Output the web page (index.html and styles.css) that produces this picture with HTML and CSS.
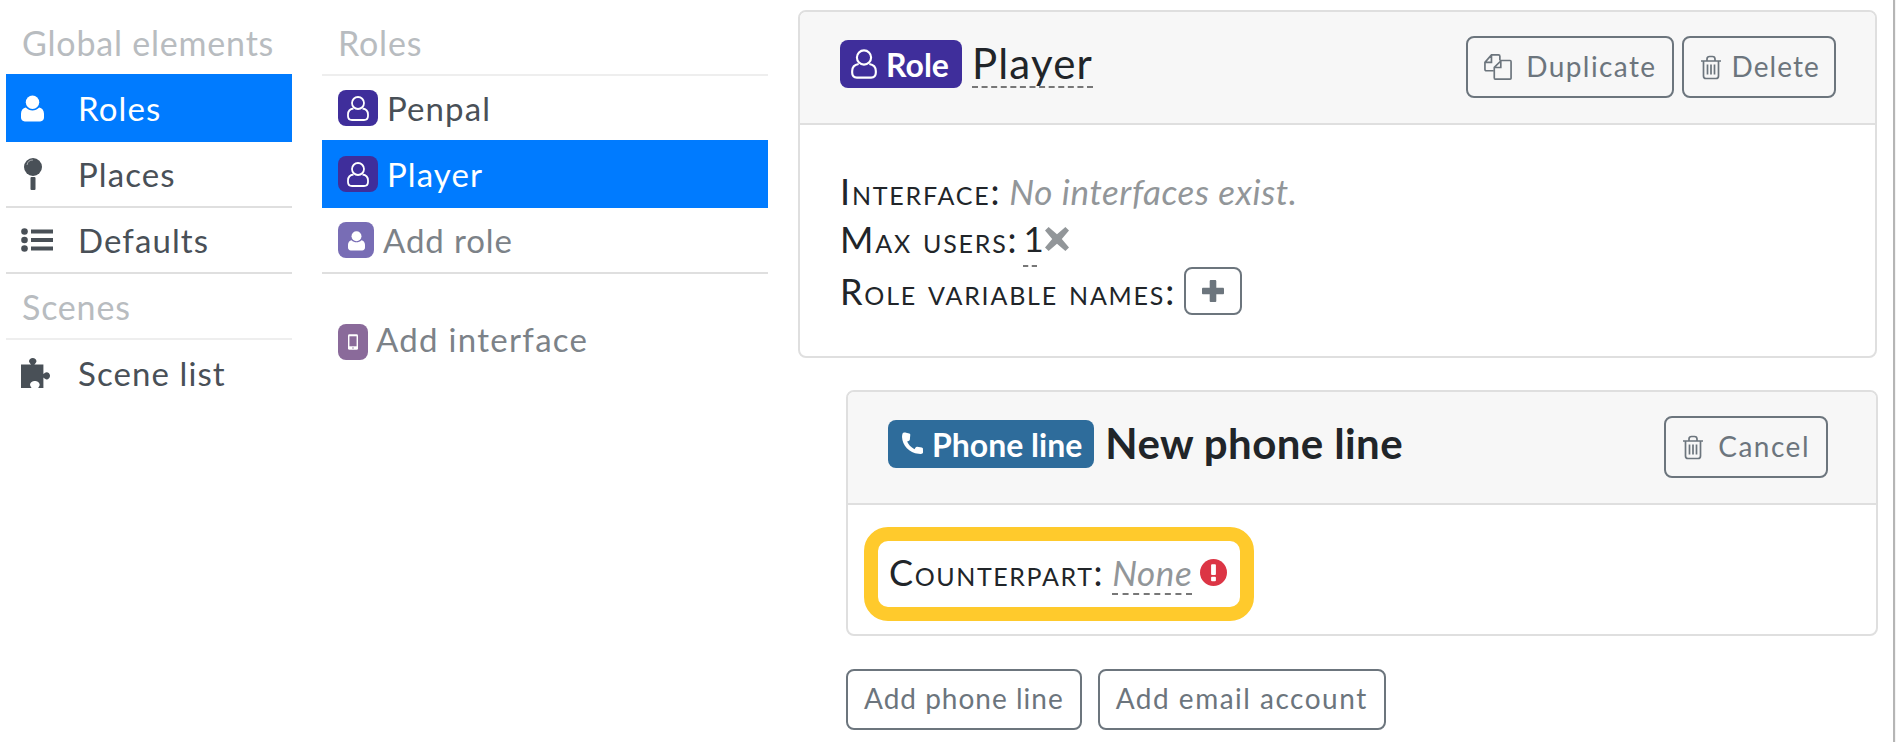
FILE: index.html
```html
<!DOCTYPE html>
<html lang="en">

<head>
    <meta charset="UTF-8">
    <meta name="viewport" content="width=device-width, initial-scale=1.0">
    <title>Role editor</title>
    <link rel="stylesheet" href="styles.css">
</head>

<body>
    <svg class="defs" width="0" height="0">
        <symbol id="user-o" viewBox="1 1 22 25">
            <circle cx="12" cy="8" r="6" fill="none" stroke="currentColor" stroke-width="1.8"/>
            <path d="M7.5 13.5C4 14 2 16.500 2 19.500V21c0 2.500 1.500 4 4 4h12c2.500 0 4-1.500 4-4v-1.500c0-3-2-5.500-5.500-6" fill="none" stroke="currentColor" stroke-width="1.800"/>
        </symbol>
        <symbol id="user" viewBox="0 0 24 28">
            <circle cx="12" cy="8" r="7"/>
            <path d="M5 13.500c2 2 4.500 3 7 3s5-1 7-3c3 .5 5 3 5 6.500v4c0 2.500-1.500 4-4 4H4c-2.500 0-4-1.500-4-4v-4c0-3.500 2-6 5-6.500z"/>
        </symbol>
        <symbol id="trash" viewBox="0 0 22 24">
            <path d="M1 5.500h20M7 5.500V3.500C7 2 8 1 9.500 1h3C14 1 15 2 15 3.500v2M3.500 5.500V20.500C3.500 22 4.500 23 6 23h10c1.500 0 2.500-1 2.500-2.500V5.500M7.500 9v10M11 9v10M14.500 9v10" fill="none" stroke="currentColor" stroke-width="1.700"/>
        </symbol>
    </svg>

    <div class="page">
        <nav class="col col-nav">
            <div class="col-head">Global elements</div>
            <a class="item active">
                <svg class="nav-icon person"><use href="#user"/></svg>
                <span>Roles</span>
            </a>
            <a class="item line">
                <svg class="nav-icon" viewBox="0 0 28 32"><circle cx="10" cy="9" r="9" fill="currentColor"/><path d="M4 7a6 6 0 0 1 6-5" stroke="#fff" stroke-width="1" fill="none" opacity=".5"/><rect x="7.500" y="19" width="5" height="13" rx="1" fill="currentColor"/></svg>
                <span>Places</span>
            </a>
            <a class="item line">
                <svg class="nav-icon" viewBox="0 0 32 24"><circle cx="3.500" cy="3.500" r="3.300" fill="currentColor"/><circle cx="3.500" cy="12" r="3.300" fill="currentColor"/><circle cx="3.500" cy="20.500" r="3.300" fill="currentColor"/><path d="M10 1.500h22v4H10zM10 10h22v4H10zM10 18.500h22v4H10z" fill="currentColor"/></svg>
                <span>Defaults</span>
            </a>
            <div class="col-head head-scenes">Scenes</div>
            <a class="item">
                <svg class="nav-icon" viewBox="0 0 30 28"><path fill="currentColor" d="M0 6h9.500C8.500 5 7.500 4 7.500 3c0-1.800 1.600-3 3.500-3s3.500 1.200 3.500 3c0 1-1 2-2 3H21v9c1-1 2-1.800 3-1.800 1.800 0 3.200 1.500 3.200 3.300S25.800 20 24 20c-1 0-2-.8-3-1.800V28h-5c.8-1 1.500-2 1.500-3 0-2-2.500-3.500-4.500-3.500S8.500 23 8.500 25c0 1 .7 2 1.500 3H0z"/></svg>
                <span>Scene list</span>
            </a>
        </nav>

        <section class="col col-list">
            <div class="col-head head-line">Roles</div>
            <a class="item row-role">
                <span class="tile tile-role"><svg class="tile-icon"><use href="#user-o"/></svg></span>
                <span>Penpal</span>
            </a>
            <a class="item row-role active">
                <span class="tile tile-role"><svg class="tile-icon"><use href="#user-o"/></svg></span>
                <span>Player</span>
            </a>
            <a class="item row-add line">
                <span class="tile tile-add"><svg class="tile-icon small"><use href="#user"/></svg></span>
                <span>Add role</span>
            </a>
            <a class="item row-add row-iface">
                <span class="tile tile-iface">
                    <svg class="phone-icon" viewBox="0 0 14 22"><rect x="0" y="0" width="14" height="22" rx="2" fill="#fff"/><rect x="2" y="3" width="10" height="14" fill="#8a6a9a"/><circle cx="7" cy="19.500" r="1" fill="#8a6a9a"/></svg>
                </span>
                <span class="iface-text">Add interface</span>
            </a>
        </section>

        <main class="content">
            <div class="card card-role">
                <div class="card-head">
                    <span class="badge badge-role"><svg class="badge-icon"><use href="#user-o"/></svg>Role</span>
                    <h2 class="title editable">Player</h2>
                    <div class="actions">
                        <button class="btn">
                            <svg class="btn-icon copy" viewBox="0 0 30 28"><path d="M10 18H2.500C1.500 18 1 17.500 1 16.500V9l7-8h7.500C16.500 1 17 1.500 17 2.500V7M8 1v8H1M18.500 7H28C29 7 29 7.500 29 8.500V26c0 1 0 1-1 1H12c-1 0-1-.5-1-1.500V14.500zM18 7.500V14.500H11" fill="none" stroke="currentColor" stroke-width="1.800"/></svg>
                            Duplicate
                        </button>
                        <button class="btn btn-delete"><svg class="btn-icon"><use href="#trash"/></svg>Delete</button>
                    </div>
                </div>
                <div class="card-body body-role">
                    <div class="field"><span class="label">Interface:</span> <em class="muted">No interfaces exist.</em></div>
                    <div class="field"><span class="label">Max users:</span> <span class="value-one">1</span>
                        <svg class="x-icon" viewBox="0 0 20 20"><path d="M3 0L10 6 17 0l3 3-6 7 6 7-3 3-7-6-7 6-3-3 6-7-6-7z"/></svg>
                    </div>
                    <div class="field field-vars"><span class="label">Role variable names:</span>
                        <button class="btn btn-plus"><svg viewBox="0 0 20 20" class="plus-icon"><path d="M8 0h4c.5 0 1 .500 1 1v6h6c.5 0 1 .500 1 1v4c0 .500-.5 1-1 1h-6v6c0 .500-.5 1-1 1H8c-.5 0-1-.500-1-1v-6H1c-.5 0-1-.500-1-1V8c0-.500.500-1 1-1h6V1c0-.500.500-1 1-1z"/></svg></button>
                    </div>
                </div>
            </div>

            <div class="nested">
                <div class="card card-phone">
                    <div class="card-head">
                        <span class="badge badge-phone">
                            <svg class="badge-icon phone" viewBox="0 0 24 24"><path fill="currentColor" d="M6.500 1.500l3 .8c.6.2 1 .7.900 1.300L10 8c-.1.600-.6 1-1.200 1.200L7.500 9.800c1 2.500 3.500 5.500 6.800 7l1-1.600c.4-.5.900-.8 1.500-.7l4.200.7c.6.1 1.100.6 1.100 1.200l.1 3.200c0 .700-.5 1.300-1.200 1.400-1 .2-2 .2-3 .1C9.500 20.200 3 13 2.800 5.500c0-1 .1-2 .4-3 .3-.8 1.300-1.200 3.300-1z"/></svg>
                            Phone line
                        </span>
                        <h2 class="title title-bold">New phone line</h2>
                        <div class="actions">
                            <button class="btn btn-cancel"><svg class="btn-icon"><use href="#trash"/></svg>Cancel</button>
                        </div>
                    </div>
                    <div class="card-body body-phone">
                        <div class="warn-box">
                            <span class="label">Counterpart:</span>
                            <em class="muted editable">None</em>
                            <svg class="warn-icon" viewBox="0 0 28 28"><circle cx="14" cy="14" r="14" fill="#dc3545"/><rect x="11.500" y="5.500" width="5" height="11" rx="1" fill="#fff"/><rect x="11.500" y="18.500" width="5" height="4.500" rx="1" fill="#fff"/></svg>
                        </div>
                    </div>
                </div>
                <div class="add-row">
                    <button class="btn btn-phone-line">Add phone line</button>
                    <button class="btn btn-email">Add email account</button>
                </div>
            </div>
        </main>

        <div class="scroll-edge"></div>
    </div>
</body>

</html>
```

FILE: styles.css
```css
* {
    box-sizing: border-box;
}

html,
body {
    height: 100%;
}

body {
    margin: 0;
    overflow: hidden;
    background-color: #fff;
    color: #212529;
    font-family: "Lato", "Open Sans", sans-serif;
    font-size: 33px;
    letter-spacing: 1.1px;
}

.defs {
    position: absolute;
}

.page {
    display: flex;
    height: 100%;
}

.col {
    flex: none;
}

.col-nav {
    width: 286px;
    margin-left: 6px;
}

.col-list {
    width: 446px;
    margin-left: 30px;
}

.col-head {
    height: 74px;
    padding: 24px 16px 0;
    color: #b8bcc0;
    font-size: 34px;
    letter-spacing: 0.8px;
    line-height: 38px;
}

.head-line {
    height: 76px;
    border-bottom: 2px solid #eeeeee;
}

.head-scenes {
    height: 66px;
    padding-top: 14px;
    border-bottom: 2px solid #eeeeee;
}

.item {
    display: flex;
    align-items: center;
    height: 66px;
    color: #495057;
}

.item.active {
    height: 68px;
    background-color: #007bff;
    color: #fff;
}

.item.line {
    border-bottom: 2px solid #dfdfdf;
}

.col-nav .item span {
    margin-left: 25px;
}

.nav-icon {
    flex: none;
    width: 32px;
    height: 32px;
    margin-left: 15px;
    color: #495057;
}

.active .nav-icon {
    color: #fff;
    fill: #fff;
}

.person {
    width: 23px;
    margin-right: 9px;
}

.row-role {
    padding-left: 16px;
    height: 64px;
}

.row-role.active {
    height: 68px;
}

.row-role .tile {
    margin-right: 9px;
}

.row-add {
    padding-left: 16px;
    height: 66px;
    color: #7c8288;
    letter-spacing: 0.9px;
}

.row-add .tile {
    margin-right: 9px;
}

.row-iface {
    height: 36px;
    margin-top: 50px;
}

.row-iface .tile {
    margin-right: 8px;
}

.iface-text {
    margin-top: -6px;
    letter-spacing: 1.3px;
}

.tile {
    display: flex;
    flex: none;
    align-items: center;
    justify-content: center;
    width: 40px;
    height: 36px;
    border-radius: 8px;
    color: #fff;
    fill: #fff;
}

.tile-role {
    background-color: #3f2e9b;
}

.tile-add {
    width: 36px;
    background-color: #786db5;
}

.tile-iface {
    width: 30px;
    background-color: #8a6a9a;
}

.tile-icon {
    width: 22px;
    height: 25px;
}

.tile-icon.small {
    width: 17px;
    height: 21px;
}

.phone-icon {
    width: 10px;
    height: 16px;
}

.content {
    flex: none;
    width: 1079px;
    margin-left: 30px;
    padding-top: 10px;
}

.card {
    border: 2px solid #dfdfdf;
    border-radius: 8px;
    background-color: #fff;
}

.card-role {
    height: 348px;
}

.card-phone {
    height: 246px;
}

.card-head {
    display: flex;
    align-items: flex-start;
    height: 113px;
    padding: 28px 39px 0 40px;
    border-bottom: 2px solid #dfdfdf;
    border-radius: 6px 6px 0 0;
    background-color: #f7f7f7;
}

.card-phone .card-head {
    padding-right: 48px;
}

.badge {
    display: flex;
    align-items: center;
    height: 48px;
    padding: 0 13px 0 11px;
    border-radius: 8px;
    background-color: #3f2e9b;
    color: #fff;
    font-size: 32px;
    font-weight: 700;
    letter-spacing: 0;
}

.badge-phone {
    padding-right: 12px;
    background-color: #2e6c9b;
}

.badge-icon {
    width: 26px;
    height: 30px;
    margin-right: 9px;
    fill: #fff;
}

.badge-icon.phone {
    width: 26px;
    height: 26px;
    margin-right: 7px;
}

.title {
    margin: 0 0 0 10px;
    font-size: 42px;
    font-weight: 400;
    letter-spacing: 1.2px;
    line-height: 46px;
}

.title-bold {
    margin-left: 11px;
    font-weight: 700;
    letter-spacing: 0.4px;
}

.editable {
    border-bottom: 2px dashed #777;
}

.actions {
    display: flex;
    gap: 8px;
    margin-left: auto;
    margin-top: -4px;
}

.btn {
    display: flex;
    align-items: center;
    height: 62px;
    padding: 0 16px 3px;
    border: 2px solid #6c757d;
    border-radius: 8px;
    background-color: transparent;
    color: #6c757d;
    font-family: inherit;
    font-size: 28px;
    letter-spacing: 1.4px;
}

.btn-icon {
    flex: none;
    width: 22px;
    height: 25px;
    margin-top: 3px;
    margin-right: 16px;
}

.btn-icon.copy {
    width: 28px;
    height: 28px;
    margin-right: 14px;
}

.btn-delete {
    padding-right: 14px;
    letter-spacing: 1.1px;
}

.btn-delete .btn-icon {
    margin-right: 9px;
}

.btn-phone-line {
    letter-spacing: 1px;
}

.btn-email {
    letter-spacing: 1.5px;
}

.btn-cancel {
    letter-spacing: 1.5px;
}

.btn-cancel .btn-icon {
    margin-right: 14px;
}

.card-body {
    padding: 42px 40px 0;
}

.field {
    display: flex;
    align-items: center;
    gap: 8px;
    height: 48px;
    font-size: 35px;
    letter-spacing: 0.6px;
}

.label {
    font-size: 36px;
    font-variant: small-caps;
    letter-spacing: 1.8px;
}

.muted {
    color: #929699;
}

.value-one {
    margin-top: 10px;
    margin-left: -3px;
    padding-bottom: 10px;
    border-bottom: 2px dashed #777;
    letter-spacing: -7px;
    line-height: 34px;
}

.x-icon {
    width: 24px;
    height: 24px;
    fill: #929699;
}

.field-vars {
    margin-top: 4px;
}

.btn-plus {
    justify-content: center;
    width: 58px;
    height: 48px;
    padding: 0;
}

.plus-icon {
    width: 22px;
    height: 22px;
    fill: #6c757d;
}

.nested {
    width: 1032px;
    margin-top: 32px;
    margin-left: 48px;
}

.body-phone {
    padding: 22px 0 0 15px;
}

.warn-box {
    display: inline-flex;
    align-items: center;
    gap: 8px;
    width: 390px;
    height: 94px;
    margin-left: 1px;
    padding: 0 8px 4px 11px;
    border: 14px solid #ffca2c;
    border-radius: 24px;
    font-size: 35px;
    letter-spacing: 0.6px;
}

.warn-box .editable {
    margin-top: 4px;
    padding-bottom: 2px;
    line-height: 38px;
}

.warn-box .label {
    letter-spacing: 1.6px;
}

.warn-icon {
    flex: none;
    width: 27px;
    height: 27px;
}

.add-row {
    display: flex;
    gap: 16px;
    margin-top: 33px;
}

.add-row .btn {
    height: 61px;
}

.scroll-edge {
    position: absolute;
    top: 0;
    right: 0;
    width: 3px;
    height: 100%;
    border-left: 2px solid #b5b5b5;
    background-color: #f4f4f4;
}
```
